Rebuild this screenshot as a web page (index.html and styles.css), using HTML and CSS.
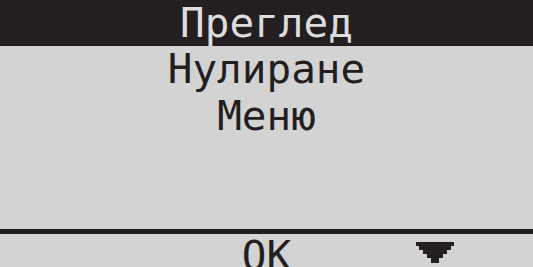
FILE: index.html
```html
<!DOCTYPE html>
<html lang="bg">
<head>
<meta charset="utf-8">
<title>Меню</title>
<link rel="stylesheet" href="styles.css">
</head>
<body>
<div class="screen">
  <div class="item selected">Преглед</div>
  <div class="item">Нулиране</div>
  <div class="item">Меню</div>
  <div class="spacer"></div>
  <div class="softkeys">
    <div class="key"></div>
    <div class="key key-ok">OK</div>
    <div class="key key-down">
      <svg class="arrow" width="38" height="21" viewBox="0 0 38 21"><polygon points="0,0 38,0 38,4 35,4 35,8 31,8 31,12 27,12 27,16 23,16 23,21 15,21 15,16 11,16 11,12 7,12 7,8 3,8 3,4 0,4" fill="#231f20"/></svg>
    </div>
  </div>
</div>
</body>
</html>
```
FILE: styles.css
```css
html, body {
  margin: 0;
  padding: 0;
  height: 100%;
  background: #d3d3d3;
}
.screen {
  height: 100vh;
  display: flex;
  flex-direction: column;
  font-family: "DejaVu Sans Mono", monospace;
  font-size: 41px;
  color: #231f20;
  overflow: hidden;
}
.item {
  height: 47px;
  line-height: 47px;
  text-align: center;
  white-space: nowrap;
}
.item.selected {
  height: 46px;
  line-height: 46px;
  background: #231f20;
  color: #dcdcdc;
}
.spacer {
  flex: 1;
}
.softkeys {
  border-top: 5px solid #231f20;
  height: 33px;
  display: grid;
  grid-template-columns: 1fr 1fr 1fr;
  line-height: 44px;
  flex-shrink: 0;
}
.key-ok {
  text-align: center;
}
.key-down {
  padding-left: 61px;
  padding-top: 8px;
}
.arrow {
  display: block;
}
```
